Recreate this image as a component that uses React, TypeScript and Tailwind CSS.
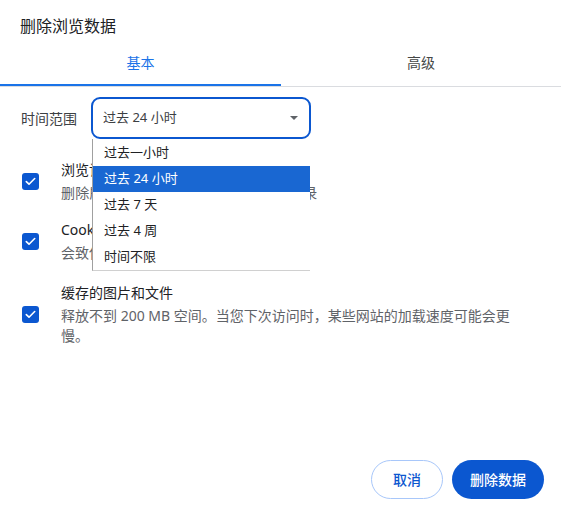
import React from "react";

const font = "font-['Noto_Sans','Noto_Sans_CJK_SC',sans-serif]";

const ranges = ["过去一小时", "过去 24 小时", "过去 7 天", "过去 4 周", "时间不限"];

function Check() {
  return (
    <div className="flex-shrink-0 w-[17px] h-[17px] rounded-[3px] bg-[#0b57d0] flex items-center justify-center">
      <svg width="11" height="9" viewBox="0 0 11 9" fill="none">
        <path d="M1.3 4.6 4 7.2 9.7 1.5" stroke="#fff" strokeWidth="1.6" strokeLinecap="round" strokeLinejoin="round" />
      </svg>
    </div>
  );
}

function Row({ title, lines, className, descClass }: { title: string; lines: string[]; className?: string; descClass?: string }) {
  return (
    <div className={"flex items-center pl-[22px] " + (className ?? "")}>
      <Check />
      <div className="ml-[22px] text-[14px] leading-[21px]">
        <div className="text-[#202124]">{title}</div>
        <div className={"mt-[2px] text-[#5f6368] " + (descClass ?? "")}>
          {lines.map((l, i) => (
            <div key={i} className={i > 0 ? "-mt-px" : ""}>{l}</div>
          ))}
        </div>
      </div>
    </div>
  );
}

export default function App() {
  return (
    <div className={"relative w-[561px] h-[516px] bg-white overflow-hidden flex flex-col " + font}>
      {/* Title */}
      <div className="h-[44px] pl-[20px] pt-[15px] text-[16px] leading-[22px] text-[#202124]">删除浏览数据</div>

      {/* Tabs */}
      <div className="flex h-[43px] border-b border-[#dadce0]">
        <div className="relative w-[281px] flex items-center justify-center pb-[5px] text-[14px] text-[#1a73e8]">
          基本
          <div className="absolute left-0 right-0 bottom-0 h-[2px] bg-[#1a73e8]" />
        </div>
        <div className="w-[280px] flex items-center justify-center pb-[5px] text-[14px] text-[#444746]">高级</div>
      </div>

      {/* Time range */}
      <div className="relative flex items-center mt-[10px] pl-[21px]">
        <div className="text-[14px] text-[#3c4043] w-[70px]">时间范围</div>
        <div className="w-[220px] h-[42px] border-2 border-[#0b57d0] rounded-[9px] flex items-center justify-between pl-[10px] pr-[11px] text-[13px] text-[#3c4043]">
          <span>过去 24 小时</span>
          <svg width="8" height="4" viewBox="0 0 8 4">
            <path d="M0 0h8L4 4z" fill="#5f6368" />
          </svg>
        </div>

        {/* Open list */}
        <div className="absolute z-10 left-[92px] top-[42px] w-[218px] pt-[1px] bg-white border-l border-b border-l-[#a0a0a0] border-b-[#d0d0d0] text-[13px]">
          {ranges.map((r, i) => (
            <div
              key={r}
              className={
                "h-[26px] flex items-center pl-[11px] " +
                (i === 1 ? "bg-[#1967d2] text-white" : "text-[#202124]")
              }
            >
              {r}
            </div>
          ))}
        </div>
      </div>

      {/* Data types */}
      <Row
        className="mt-[20px]"
        descClass="tracking-[0.25px]"
        title="浏览记录"
        lines={["删除所有已同步设备中的搜索和浏览记录"]}
      />
      <Row className="mt-[16px]" title="Cookie 及其他网站数据" lines={["会致使您从大多数网站退出。"]} />
      <Row
        className="mt-[19px]"
        title="缓存的图片和文件"
        lines={["释放不到 200 MB 空间。当您下次访问时，某些网站的加载速度可能会更", "慢。"]}
      />

      {/* Footer */}
      <div className="mt-auto flex justify-end gap-[9px] pr-[17px] pb-[17px]">
        <button className="h-[39px] w-[72px] rounded-full border border-[#a8c7fa] text-[14px] font-medium text-[#0b57d0] bg-white">
          取消
        </button>
        <button className="h-[39px] w-[92px] rounded-full bg-[#0b57d0] text-[14px] font-medium text-white">
          删除数据
        </button>
      </div>
    </div>
  );
}
